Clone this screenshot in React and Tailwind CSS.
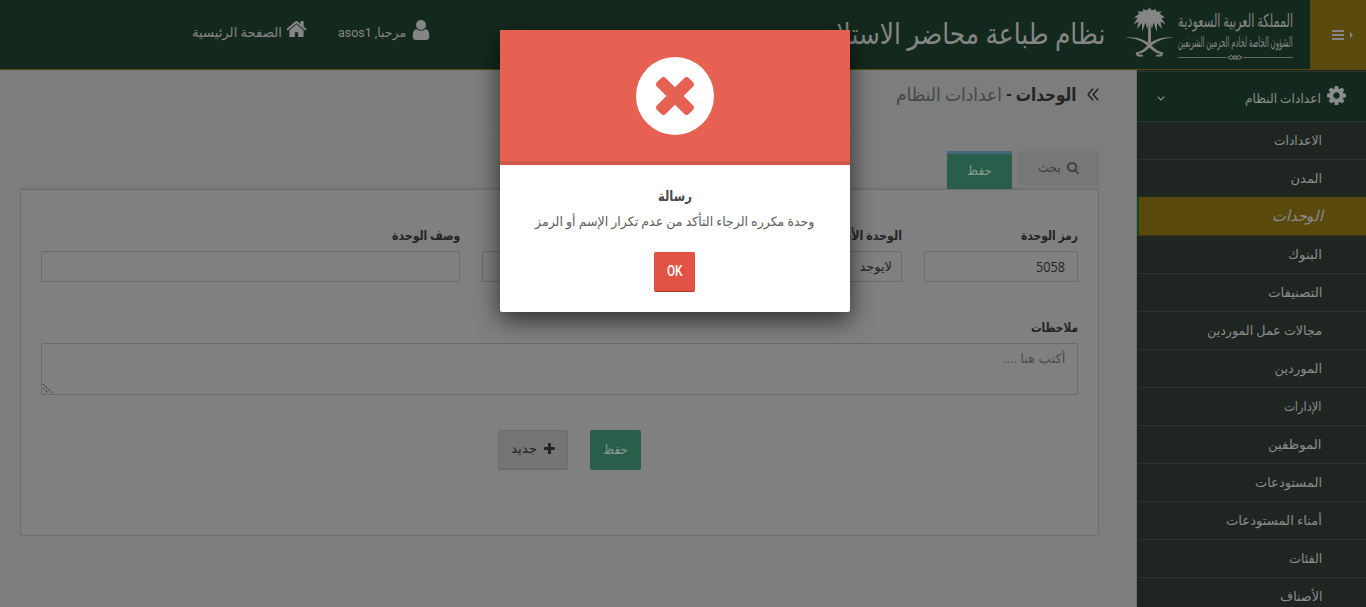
import { useLayoutEffect, useRef, useState } from "react";

const icons = {
  home: "M1472 992v480q0 26-19 45t-45 19h-384v-384h-256v384h-384q-26 0-45-19t-19-45v-480q0-1 .5-3t.5-3l575-474 575 474q1 2 1 6zm223-69l-62 74q-8 9-21 11h-3q-13 0-21-7l-692-577-692 577q-12 8-24 7-13-2-21-11l-62-74q-8-10-7-23.5t11-21.5l719-599q32-26 76-26t76 26l244 204v-195q0-14 9-23t23-9h192q14 0 23 9t9 23v408l219 182q10 8 11 21.5t-7 23.5z",
  user: "M1536 1399q0 109-62.5 187t-150.5 78h-854q-88 0-150.5-78t-62.5-187q0-85 8.5-160.5t31.5-152 58.5-131 94-89 134.5-34.5q131 128 313 128t313-128q76 0 134.5 34.5t94 89 58.5 131 31.5 152 8.5 160.5zm-256-887q0 159-112.5 271.5t-271.5 112.5-271.5-112.5-112.5-271.5 112.5-271.5 271.5-112.5 271.5 112.5 112.5 271.5z",
  cog: "M1152 896q0-106-75-181t-181-75-181 75-75 181 75 181 181 75 181-75 75-181zm512-109v222q0 12-8 23t-20 13l-185 28q-19 54-39 91 35 50 107 138 10 12 10 25t-9 23q-27 37-99 108t-94 71q-12 0-26-9l-138-108q-44 23-91 38-16 136-29 186-7 28-36 28h-222q-14 0-24.5-8.5t-11.5-21.5l-28-184q-49-16-90-37l-141 107q-10 9-25 9-14 0-25-11-126-114-165-168-7-10-7-23 0-12 8-23 15-21 51-66.5t54-70.5q-27-50-41-99l-183-27q-13-2-21-12.5t-8-23.5v-222q0-12 8-23t19-13l186-28q14-46 39-92-40-57-107-138-10-12-10-24 0-10 9-23 26-36 98.5-107.5t94.5-71.5q13 0 26 10l138 107q44-23 91-38 16-136 29-186 7-28 36-28h222q14 0 24.5 8.5t11.5 21.5l28 184q49 16 90 37l142-107q9-9 24-9 13 0 25 10 129 119 165 170 7 8 7 22 0 12-8 23-15 21-51 66.5t-54 70.5q26 50 41 98l183 28q13 2 21 12.5t8 23.5z",
  search: "M1216 832q0-185-131.5-316.5t-316.5-131.5-316.5 131.5-131.5 316.5 131.5 316.5 316.5 131.5 316.5-131.5 131.5-316.5zm512 832q0 52-38 90t-90 38q-54 0-90-38l-343-342q-179 124-399 124-143 0-273.5-55.5t-225-150-150-225-55.5-273.5 55.5-273.5 150-225 225-150 273.5-55.5 273.5 55.5 225 150 150 225 55.5 273.5q0 220-124 399l343 343q37 37 37 90z",
  plus: "M1600 736v192q0 40-28 68t-68 28h-416v416q0 40-28 68t-68 28h-192q-40 0-68-28t-28-68v-416h-416q-40 0-68-28t-28-68v-192q0-40 28-68t68-28h416v-416q0-40 28-68t68-28h192q40 0 68 28t28 68v416h416q40 0 68 28t28 68z",
  times: "M1490 1322q0 40-28 68l-136 136q-28 28-68 28t-68-28l-294-294-294 294q-28 28-68 28t-68-28l-136-136q-28-28-28-68t28-68l294-294-294-294q-28-28-28-68t28-68l136-136q28-28 68-28t68 28l294 294 294-294q28-28 68-28t68 28l136 136q28 28 28 68t-28 68l-294 294 294 294q28 28 28 68z",
};

function Icon({ name, box = "0 0 1792 1792", className }) {
  return (
    <svg viewBox={box} fill="currentColor" className={"shrink-0 " + className}>
      <path d={icons[name]} />
    </svg>
  );
}

// Condenses or widens a single line of text to the given width.
function Fit({ w, className = "", children }) {
  const ref = useRef(null);
  const [scale, setScale] = useState(1);
  useLayoutEffect(() => {
    setScale(w / ref.current.offsetWidth);
  }, [w, children]);
  return (
    <span className={"flex shrink-0 justify-start whitespace-nowrap " + className} style={{ width: w }}>
      <span ref={ref} className="block shrink-0 origin-right" style={{ transform: `scaleX(${scale})` }}>
        {children}
      </span>
    </span>
  );
}

function Emblem() {
  return (
    <svg viewBox="0 0 48 52" className="h-[52px] w-[48px] shrink-0" fill="#858585">
      <path d="M23.300 12H25.700L26 36H23Z" />
      <ellipse cx="24.500" cy="9" rx="8" ry="6" />
      <path d="M24.500 .5L27 3.500L31 2L31 4.500L36.500 4.500L35 7L40 10.500L36.500 11L40.500 17.500L35.500 14.500L37 22L32 16L32 25L28.500 15.500L27 22L24.500 14L22 22L20.500 15.500L17 25L17 16L12 22L13.500 14.500L8.500 17.500L12.500 11L9 10.500L14 7L12.500 4.500L18 4.500L18 2L22 3.500Z" />
      <path d="M.5 30.500C12 29.500 21 33 26.500 38.500C31 43 34 45 38.500 45.500L37.500 47C32 46.800 28 44 24 40C18 34 11 31.500 .5 30.500Z" />
      <path d="M48 30.500C37 29.500 28 33 22.500 38.500C18 43 15 45 10.500 45.500L11.500 47C17 46.800 21 44 25 40C31 34 38 31.500 48 30.500Z" />
      <path d="M36 45.500L38 46.500C38 49.500 35.500 50 31 49.500L31.500 47.500C34.500 48.200 36 47.500 36 45.500ZM13 45.500L11 46.500C11 49.500 13.500 50 18 49.500L17.500 47.500C14.500 48.200 13 47.500 13 45.500Z" />
    </svg>
  );
}

const menu = [
  ["الاعدادات", 48],
  ["المدن", 31],
  ["الوحدات", 51],
  ["البنوك", 34],
  ["التصنيفات", 54],
  ["مجالات عمل الموردين", 115],
  ["الموردين", 47],
  ["الإدارات", 38],
  ["الموظفين", 54],
  ["المستودعات", 67],
  ["أمناء المستودعات", 96],
  ["الفئات", 33],
  ["الأصناف", 42],
];

function Header() {
  return (
    <header className="flex h-[70px] shrink-0 border-b border-[#584a10] bg-[#14291d] text-[#858585]">
      <div className="flex w-14 items-center gap-1.5 bg-[#5a490c] pr-[13px]">
        <svg viewBox="0 0 3 6" className="h-1.5 w-[3px]" fill="currentColor"><path d="M0 0L3 3L0 6Z" /></svg>
        <svg viewBox="0 0 12 10" className="h-2.5 w-3" fill="currentColor"><path d="M0 0h12v2H0zM0 4h12v2H0zM0 8h12v2H0z" /></svg>
      </div>
      <div className="mr-[17px] flex gap-[5px] pt-[7px]">
        <div className="flex w-[115px] flex-col pt-0.5">
          <Fit w={115} className="text-[18px] leading-[23px]">المملكة العربية السعودية</Fit>
          <Fit w={115} className="text-[14px] leading-[21px]">الشؤون الخاصة لخادم الحرمين الشريفين</Fit>
          <svg viewBox="0 0 115 6" className="mt-px h-1.5 w-[115px]" stroke="currentColor" fill="none">
            <path d="M0 3.500H49M65 3.500H115" strokeWidth="1" opacity=".7" />
            <path d="M50 3.500L53 1.500L56 3.500L53 5.500ZM58 3.500L61 1.500L64 3.500L61 5.500ZM56 1V6M58 1V6" />
          </svg>
        </div>
        <Emblem />
      </div>
      <Fit w={284} className="mr-5 pt-[14px] text-[29px] leading-[40px]">نظام طباعة محاضر الاستلام</Fit>
      <nav className="mr-auto flex pl-[192px] pt-[18px]">
        <div className="flex gap-1.5">
          <Icon name="user" box="256 128 1280 1536" className="mt-0.5 h-[20px] w-[18px]" />
          <Fit w={68} className="text-[13px] leading-[29px]">مرحبا, asos1</Fit>
        </div>
        <div className="mr-[31px] flex gap-1">
          <Icon name="home" box="90 250 1612 1290" className="mt-[3px] h-[16px] w-[21px]" />
          <Fit w={90} className="text-[13px] leading-[29px]">الصفحة الرئيسية</Fit>
        </div>
      </nav>
    </header>
  );
}

function Sidebar() {
  return (
    <aside className="w-[230px] shrink-0 overflow-hidden border-l border-[#6c6e6e] bg-[#1f2622] text-[#8a8c8b]">
      <div className="mt-px flex h-[51px] items-center border-y border-t-[#23372b] border-b-[#2b3730] bg-[#14291d] pr-5">
        <Icon name="cog" box="128 128 1536 1536" className="mb-[3px] h-[19px] w-[19px]" />
        <Fit w={76} className="mr-[6px] mt-[5px] text-[13px] leading-[20px]">اعدادات النظام</Fit>
        <svg viewBox="0 0 8 5" className="ml-[20px] mr-auto mt-[3px] h-[5px] w-2" fill="none" stroke="currentColor" strokeWidth="1.200"><path d="M.7.7L4 4L7.300.7" /></svg>
      </div>
      {menu.map(([label, w], i) => (
        <div
          key={label}
          className={
            i === 2
              ? "-mt-px flex h-[39px] items-center border-b border-l-2 border-b-[#3e3714] border-l-[#164a17] bg-[#5a490c] pr-[43px] italic"
              : "flex h-[38px] items-center border-b border-[#2c322f] pr-[44px]"
          }
        >
          <Fit w={w} className={i === 2 ? "text-[15px] leading-[24px]" : "text-[13px] leading-[22px]"}>{label}</Fit>
        </div>
      ))}
    </aside>
  );
}

const field = "h-[31px] rounded-[2px] border border-[#6b6b6b] bg-[#808080]";

function Content() {
  return (
    <main className="flex-1 bg-[#7d7d7d] text-[#242424]">
      <div className="flex h-[60px] items-start pr-[37px] pt-[10px]">
        <svg viewBox="0 0 12 13" className="mt-2 h-[13px] w-3" fill="none" stroke="currentColor" strokeWidth="1.500"><path d="M6 .7L1 6.500L6 12.300M11.200.7L6.200 6.500L11.200 12.300" /></svg>
        <Fit w={70} className="mr-[11px] text-[18px] font-bold leading-[30px]">الوحدات -</Fit>
        <Fit w={106} className="mr-1 text-[18px] leading-[30px] text-[#43474b]">اعدادات النظام</Fit>
      </div>
      <div className="ml-10 mr-4 h-px bg-[#808080]" />
      <div className="pl-5 pr-[37px] pt-5">
        <div className="flex h-[38px] items-start gap-1.5 border-b-2 border-[#777]">
          <div className="flex h-[35px] w-[81px] items-center bg-[#777] pb-px pr-5 text-[#404040]">
            <Icon name="search" box="64 128 1664 1664" className="h-3 w-3" />
            <Fit w={23} className="mr-[6px] text-[13px] leading-[22px]">بحث</Fit>
          </div>
          <div className="flex h-[38px] w-[65px] shrink-0 items-center justify-center border-t-[3px] border-[#44677b] bg-[#285e4a] pb-0.5 text-[#879990]">
            <Fit w={25} className="text-[13px] leading-[22px]">حفظ</Fit>
          </div>
        </div>
        <section className="h-[347px] rounded-b-[2px] border border-[#6d6d6d] bg-[#808080] px-5 pt-[35px]">
          <div className="flex gap-[22px]">
            <div className="w-[154px]">
              <Fit w={57} className="text-[13px] font-bold leading-[22px]">رمز الوحدة</Fit>
              <div className={field + " mt-1 flex items-center pr-3"}>
                <Fit w={29} className="font-['Open_Sans'] text-[14px]">5058</Fit>
              </div>
            </div>
            <div className="w-[198px]">
              <Fit w={88} className="text-[13px] font-bold leading-[22px]">الوحدة الأساسية</Fit>
              <div className={field + " mt-1 flex items-center pr-[9px]"}>
                <Fit w={33} className="text-[13px]">لايوجد</Fit>
              </div>
            </div>
            <div className="w-[200px] pt-[26px]">
              <div className={field} />
            </div>
            <div className="w-[419px]">
              <Fit w={68} className="text-[13px] font-bold leading-[22px]">وصف الوحدة</Fit>
              <div className={field + " mt-1"} />
            </div>
          </div>
          <Fit w={47} className="mt-[35px] text-[13px] font-bold leading-[22px]">ملاحظات</Fit>
          <div className="mt-1 flex h-[52px] items-start justify-between rounded-[2px] border border-[#6b6b6b] pb-px pl-px pr-3 pt-1">
            <Fit w={62} className="text-[13px] leading-[22px] text-[#4d4d4d]">أكتب هنا ....</Fit>
            <svg viewBox="0 0 9 9" className="h-[9px] w-[9px] self-end" stroke="#303030" strokeDasharray="1.400 .8"><path d="M0 0L9 9M0 4L5 9" /></svg>
          </div>
          <div className="mt-[35px] flex gap-[22px] pr-[437px]">
            <div className="flex h-10 w-[51px] items-center justify-center rounded-[2px] bg-[#285e4a] text-[#879990]">
              <Fit w={25} className="text-[13px] leading-[22px]">حفظ</Fit>
            </div>
            <div className="flex h-10 w-[70px] items-center rounded-[2px] border border-b-2 border-[#6d6d6d] bg-[#757575] pb-0.5 pr-3">
              <Icon name="plus" box="192 128 1408 1408" className="h-[11px] w-[11px]" />
              <Fit w={26} className="mr-[7px] text-[13px] leading-[22px]">جديد</Fit>
            </div>
          </div>
        </section>
      </div>
    </main>
  );
}

function Dialog() {
  return (
    <div className="absolute left-[500px] top-[30px] flex h-[282px] w-[350px] flex-col items-center rounded-[2px] bg-white text-[#4a4a4a] shadow-[0_8px_25px_rgba(0,0,0,0.65)]">
      <div className="flex h-[135px] w-full justify-center rounded-t-[2px] border-b-4 border-[#cf5848] bg-[#e66151] pr-px pt-[27px]">
        <div className="flex h-[78px] w-[78px] items-center justify-center rounded-full bg-white">
          <Icon name="times" box="302 366 1188 1188" className="h-[38px] w-[38px] text-[#e66151]" />
        </div>
      </div>
      <Fit w={34} className="mt-[19px] text-[14px] font-bold leading-[24px]">رسالة</Fit>
      <Fit w={279} className="mt-0.5 text-[13px] leading-[24px] text-[#5d5d5d]">وحدة مكرره الرجاء التأكد من عدم تكرار الإسم أو الرمز</Fit>
      <button className="mr-px mt-[18px] flex h-10 w-[41px] items-center justify-center rounded-[2px] border border-[#d84e40] border-b-[#a8382d] bg-[#e15445] pb-px text-white">
        <Fit w={16} className="text-[14px] font-medium">OK</Fit>
      </button>
    </div>
  );
}

export default function App() {
  return (
    <div dir="rtl" className="relative flex h-[607px] w-full flex-col overflow-hidden bg-[#7d7d7d] font-['Roboto','DejaVu_Sans',sans-serif]">
      <Header />
      <div className="flex min-h-0 flex-1">
        <Sidebar />
        <Content />
      </div>
      <Dialog />
    </div>
  );
}
